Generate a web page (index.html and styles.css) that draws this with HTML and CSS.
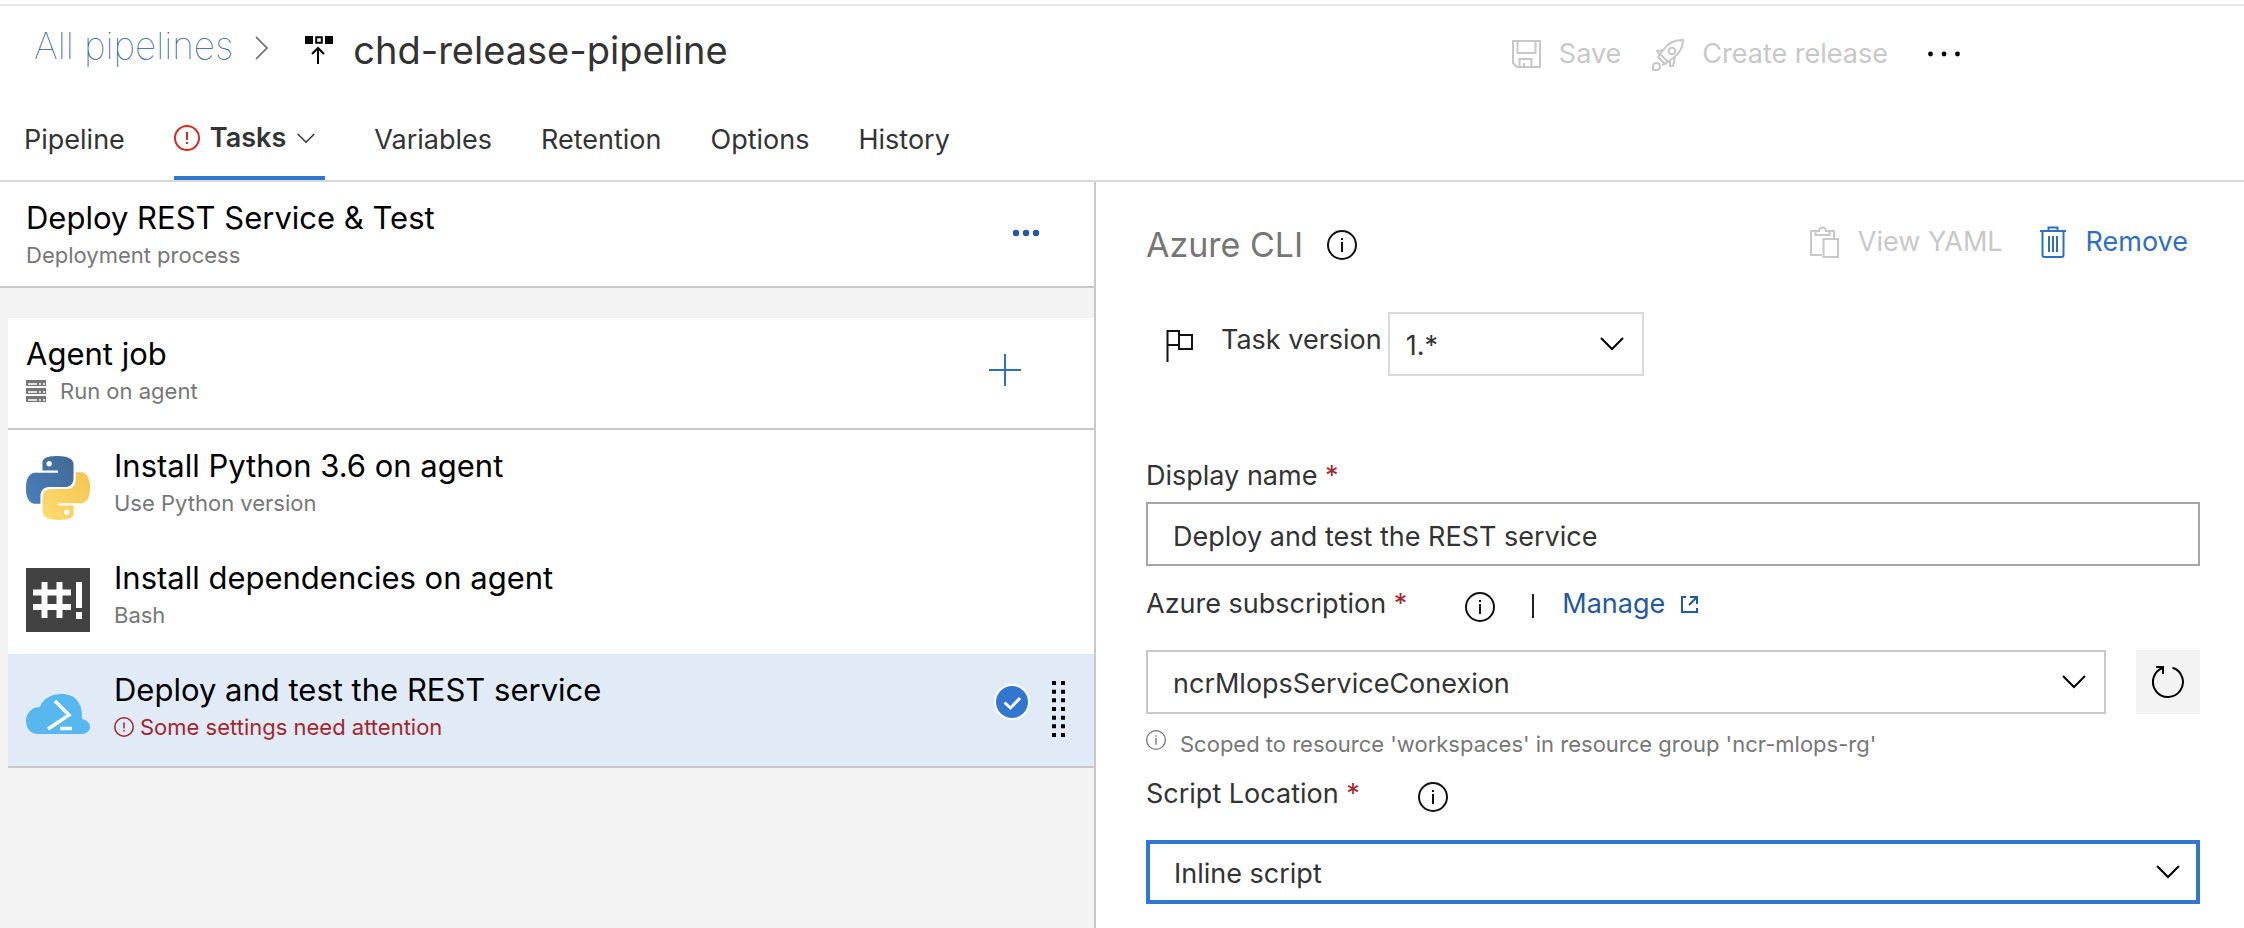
FILE: index.html
```html
<!DOCTYPE html>
<html lang="en">
<head>
<meta charset="utf-8">
<title>chd-release-pipeline</title>
<link rel="stylesheet" href="styles.css">
</head>
<body>
<svg class="defs" aria-hidden="true">
  <symbol id="info" viewBox="0 0 30 30"><g fill="none" stroke="currentColor"><circle cx="15" cy="15" r="14" stroke-width="2"/><path d="M15 12v10M15 8v2" stroke-width="2"/></g></symbol>
  <symbol id="alert" viewBox="0 0 26 26"><g fill="none" stroke="currentColor"><circle cx="13" cy="13" r="12" stroke-width="2"/><path d="M13 7v8M13 17v2" stroke-width="2"/></g></symbol>
  <symbol id="chevron" viewBox="0 0 24 14"><path d="M1 1l11 11L23 1" fill="none" stroke="currentColor" stroke-width="2"/></symbol>
</svg>

<header class="page-header">
  <div class="title-row">
    <nav class="breadcrumb" aria-label="Breadcrumb">
      <a class="crumb-link" href="#">All pipelines</a>
      <svg class="crumb-sep" viewBox="0 0 14 24" aria-hidden="true"><path d="M1 1l11 11L1 23" fill="none" stroke="#666" stroke-width="1.6"/></svg>
      <svg class="pipeline-icon" viewBox="0 0 28 28" aria-hidden="true"><path d="M0 0h8v8H0zM20 0h8v8h-8z"/><path d="M11.2 1.2h5.6v5.6h-5.6zM13 28V12.500M7 18l6-6 6 6" fill="none" stroke="#000" stroke-width="2"/></svg>
      <h1 class="pipeline-name">chd-release-pipeline</h1>
    </nav>
    <div class="header-actions">
      <button class="action save" disabled>
        <svg width="29" height="28" viewBox="0 0 29 28" fill="none" stroke="currentColor" stroke-width="2" aria-hidden="true"><path d="M1 1h27v26H5l-4-4zM5.500 1v12h18V1M7.500 27v-8h12v8M12 27v-4"/></svg>
        Save
      </button>
      <button class="action" disabled>
        <svg width="33" height="33" viewBox="0 0 33 33" fill="none" stroke="currentColor" stroke-width="2" stroke-linejoin="round" aria-hidden="true"><path d="M32 2C24 2 17 5 13 11l-6 8 7 7 8-6C29 15 32 9 32 2zM13 12l-7 1 3 4M19 22v6h3l2-9M9 16l8 8M13 26l-2 1"/><circle cx="21" cy="13" r="3.300"/><path d="M2 32v-4a3.500 3.500 0 1 1 3.500 4z"/></svg>
        Create release
      </button>
      <button class="icon-button more" aria-label="More actions"><svg width="32" height="6" viewBox="0 0 32 6" aria-hidden="true"><circle cx="2.500" cy="3" r="2.400"/><circle cx="16" cy="3" r="2.400"/><circle cx="29.500" cy="3" r="2.400"/></svg></button>
    </div>
  </div>
  <nav class="tabs" aria-label="Pipeline sections">
    <a class="tab" href="#">Pipeline</a>
    <a class="tab tab-active" href="#" aria-current="page">
      <svg class="tab-alert" aria-hidden="true"><use href="#alert"/></svg>
      Tasks
      <svg class="tab-chevron" aria-hidden="true"><use href="#chevron"/></svg>
    </a>
    <a class="tab" href="#">Variables</a>
    <a class="tab" href="#">Retention</a>
    <a class="tab" href="#">Options</a>
    <a class="tab" href="#">History</a>
  </nav>
</header>

<main class="workspace">
  <section class="process" aria-label="Tasks">
    <div class="stage">
      <div class="row-text">
        <h2 class="row-title">Deploy REST Service &amp; Test</h2>
        <p class="row-sub">Deployment process</p>
      </div>
      <button class="icon-button stage-more" aria-label="Stage actions"><svg width="28" height="8" viewBox="0 0 28 8" fill="currentColor" aria-hidden="true"><circle cx="4" cy="4" r="3.200"/><circle cx="14" cy="4" r="3.200"/><circle cx="24" cy="4" r="3.200"/></svg></button>
    </div>
    <div class="job">
      <div class="job-head">
        <div class="row-text">
          <h3 class="row-title">Agent job</h3>
          <p class="row-sub"><svg class="server" viewBox="0 0 20 22" aria-hidden="true"><path d="M0 0h20v6H0zM0 8h20v6H0zM0 16h20v6H0z" fill="#777"/><path d="M2 4h9M2 12h9M2 20h9M13 4h2M17 4h2M13 12h2M17 12h2M13 20h2M17 20h2" stroke="#fff" stroke-width="1.500"/></svg>Run on agent</p>
        </div>
        <button class="icon-button add" aria-label="Add a task"><svg width="32" height="32" viewBox="0 0 32 32" aria-hidden="true"><path d="M0 16h32M16 0v32" stroke="currentColor" stroke-width="2"/></svg></button>
      </div>
      <ul class="tasks">
        <li class="task">
          <svg class="task-icon" viewBox="0 0 24 24" aria-hidden="true">
            <defs>
              <linearGradient id="blue" x1="0" y1="1" x2="1" y2="0"><stop offset="0" stop-color="#4a80bb"/><stop offset="1" stop-color="#416993"/></linearGradient>
              <linearGradient id="gold" x1="0" y1="1" x2="1" y2="0"><stop offset="0" stop-color="#f4c550"/><stop offset="1" stop-color="#fbdc74"/></linearGradient>
              <path id="snake" d="M14.250.18l.9.2.73.26.59.3.45.32.34.34.25.34.16.33.1.3.04.26.02.2-.01.13V8.500l-.05.63-.13.55-.21.46-.26.38-.3.31-.33.25-.35.19-.35.14-.33.1-.3.07-.26.04-.21.02H8.770l-.69.05-.59.14-.5.22-.41.27-.33.32-.27.35-.2.36-.15.37-.1.35-.07.32-.04.27-.02.21v3.060H3.170l-.21-.03-.28-.07-.32-.12-.35-.18-.36-.26-.36-.36-.35-.46-.32-.59-.28-.73-.21-.88-.14-1.050-.05-1.230.06-1.220.16-1.040.24-.87.32-.71.36-.57.4-.44.42-.33.42-.24.4-.16.36-.1.32-.05.24-.01h.16l.06.01h8.160v-.83H6.180l-.01-2.750-.02-.37.05-.34.11-.31.17-.28.25-.26.31-.23.38-.2.44-.18.51-.15.58-.12.64-.1.71-.06.77-.04.84-.02 1.270.05zm-6.300 1.980l-.23.33-.08.41.08.41.23.34.33.22.41.09.41-.09.33-.22.23-.34.08-.41-.08-.41-.23-.33-.33-.22-.41-.09-.41.09z"/>
            </defs>
            <use href="#snake" fill="url(#blue)"/><use href="#snake" fill="url(#gold)" transform="rotate(180 12 12)"/>
          </svg>
          <div class="row-text">
            <h4 class="row-title">Install Python 3.6 on agent</h4>
            <p class="row-sub">Use Python version</p>
          </div>
        </li>
        <li class="task">
          <svg class="task-icon" viewBox="0 0 64 64" aria-hidden="true"><path d="M0 0h64v64H0z" fill="#424242"/><path d="M7 24.500h38M7 39h38M18.500 14v36M33.500 14v36M53 14v26M53 44v7" stroke="#fff" stroke-width="6"/></svg>
          <div class="row-text">
            <h4 class="row-title">Install dependencies on agent</h4>
            <p class="row-sub">Bash</p>
          </div>
        </li>
        <li class="task task-selected">
          <svg class="task-icon" viewBox="0 0 64 64" aria-hidden="true"><path d="M12 54C5 54 0 49 0 41S6 27 14 27C17 18 26 14 36 14c13 0 21 9 20 25 5 1 8 4 8 8 0 4-4 7-8 7z" fill="#56b8ee"/><path d="M29 21l14 14-21 14" fill="none" stroke="#fff" stroke-width="3.500"/><path d="M34 48.500h12" stroke="#fff" stroke-width="3.500"/></svg>
          <div class="row-text">
            <h4 class="row-title">Deploy and test the REST service</h4>
            <p class="row-sub row-error"><svg class="small-alert" aria-hidden="true"><use href="#alert"/></svg>Some settings need attention</p>
          </div>
          <svg class="check" viewBox="0 0 36 36" aria-hidden="true"><circle cx="18" cy="18" r="18" fill="#fff"/><circle cx="18" cy="18" r="16" fill="#3277cf"/><path d="M10.500 18.500l6 5.500 9.500-10" fill="none" stroke="#fff" stroke-width="3"/></svg>
          <svg class="grip" viewBox="0 0 13 56" aria-hidden="true"><path d="M2 0v56M11 0v56" stroke="#000" stroke-width="4" stroke-dasharray="4 4.660"/></svg>
        </li>
      </ul>
    </div>
  </section>

  <form class="details">
    <div class="details-head">
      <h2 class="details-title">Azure CLI <svg class="info" aria-hidden="true"><use href="#info"/></svg></h2>
      <div class="details-actions">
        <button class="action" type="button" disabled>
          <svg width="30" height="32" viewBox="0 0 30 32" fill="none" stroke="currentColor" stroke-width="2" aria-hidden="true"><path d="M12 29H1V5h8a3.500 3.500 0 0 1 7 0h8v7M5.500 5v4h14V5M13.500 13H28v18H13.500z"/></svg>
          View YAML
        </button>
        <button class="action action-link" type="button">
          <svg width="26" height="32" viewBox="0 0 26 32" fill="none" stroke="currentColor" stroke-width="2" aria-hidden="true"><path d="M0 5h26M8.500 5V1.500h9V5M2.500 5v24q0 2 2 2h17q2 0 2-2V5M9 10v16M13 10v16M17 10v16"/></svg>
          Remove
        </button>
      </div>
    </div>

    <div class="version">
      <svg class="flag" viewBox="0 0 28 32" fill="none" stroke="#111" stroke-width="2" aria-hidden="true"><path d="M1.500 32V1H13v14H1.500M13 5h13v14H13v-4"/></svg>
      <label class="version-label" for="version">Task version</label>
      <div class="select-wrap version-select">
        <select class="control control-light" id="version"><option>1.*</option></select>
        <svg class="chevron" aria-hidden="true"><use href="#chevron"/></svg>
      </div>
    </div>

    <div class="field field-name">
      <div class="label-row"><label for="name">Display name <span class="req">*</span></label></div>
      <input class="control control-dark" id="name" type="text" value="Deploy and test the REST service">
    </div>

    <div class="field field-wide">
      <div class="label-row">
        <label for="subscription">Azure subscription <span class="req">*</span></label>
        <svg class="info" aria-hidden="true"><use href="#info"/></svg>
        <span class="divider"></span>
        <a class="manage" href="#">Manage <svg width="18" height="18" viewBox="0 0 18 18" fill="none" stroke="currentColor" stroke-width="2" aria-hidden="true"><path d="M5 2H1v15h15v-4M9 2h7v7M16 2l-8 8"/></svg></a>
      </div>
      <div class="control-row">
        <div class="select-wrap">
          <select class="control" id="subscription"><option>ncrMlopsServiceConexion</option></select>
          <svg class="chevron" aria-hidden="true"><use href="#chevron"/></svg>
        </div>
        <button class="refresh" type="button" aria-label="Refresh"><svg width="32" height="32" viewBox="0 0 32 32" fill="none" stroke="#000" stroke-width="2" aria-hidden="true"><path d="M20.500 1.700A15 15 0 1 1 10.500 2M4 1h7v7"/></svg></button>
      </div>
      <p class="hint"><svg class="hint-icon" aria-hidden="true"><use href="#info"/></svg>Scoped to resource 'workspaces' in resource group 'ncr-mlops-rg'</p>
    </div>

    <div class="field field-wide field-script">
      <div class="label-row">
        <label for="location">Script Location <span class="req">*</span></label>
        <svg class="info" aria-hidden="true"><use href="#info"/></svg>
      </div>
      <div class="select-wrap">
        <select class="control control-focus" id="location"><option>Inline script</option></select>
        <svg class="chevron" aria-hidden="true"><use href="#chevron"/></svg>
      </div>
    </div>
  </form>
</main>
</body>
</html>
```
FILE: styles.css
```css
* { box-sizing: border-box; }

body {
  margin: 0;
  padding-top: 4px;
  min-height: 100vh;
  display: flex;
  flex-direction: column;
  font: 27px/40px Inter, "Liberation Sans", sans-serif;
  color: #333;
  background: #fff;
}

h1, h2, h3, h4, p, ul { margin: 0; padding: 0; font-weight: 400; }
ul { list-style: none; }
a { text-decoration: none; color: inherit; }
svg { flex: none; display: block; }
button, input, select { font: inherit; color: inherit; margin: 0; }
button { border: 0; padding: 0; background: none; }
.defs { position: absolute; width: 0; height: 0; }

/* Header */
.page-header { border-top: 2px solid #eaeaea; border-bottom: 2px solid #d9d9d9; }
.title-row { display: flex; justify-content: space-between; height: 84px; padding: 0 284px 0 34px; }
.breadcrumb { display: flex; align-items: center; }
.crumb-link { font-size: 37px; line-height: 48px; font-weight: 100; color: #1f5a9e; margin-bottom: 4px; }
.crumb-sep { width: 14px; height: 24px; margin-left: 22px; }
.pipeline-icon { width: 28px; height: 28px; margin: 4px 20px 0 36px; }
.pipeline-name { font-size: 38px; line-height: 48px; margin-top: 4px; }
.header-actions { display: flex; align-items: center; padding-top: 12px; gap: 30px; }
.action { display: flex; align-items: center; gap: 18px; white-space: nowrap; }
.action:disabled { color: #c8c8c8; }
.icon-button { display: flex; }
.more { margin-left: 10px; }

.tabs { display: flex; align-items: flex-end; height: 90px; padding-left: 24px; gap: 49px; }
.tab { padding-bottom: 20px; }
.tab-active { display: flex; align-items: center; font-weight: 600; padding: 0 10px 18px 0; border-bottom: 4px solid #3277cf; }
.tab-alert { width: 26px; height: 26px; margin-right: 10px; color: #d62d20; }
.tab-chevron { width: 18px; height: 11px; margin-left: 11px; }

/* Task list */
.workspace { flex: 1; display: grid; grid-template-columns: 1096fr 1148fr; }
.process { background: #f3f3f3; border-right: 2px solid #c8c8c8; }
.stage, .job-head, .task { display: flex; background: #fff; padding-top: 16px; }
.stage { height: 106px; padding-left: 26px; border-bottom: 2px solid #c8c8c8; }
.row-text { flex: 1; min-width: 0; }
.row-title { font-size: 31px; line-height: 40px; color: #000; }
.row-sub { display: flex; align-items: center; font-size: 22px; line-height: 34px; color: #777; }
.row-error { color: #a4262c; }
.stage-more { align-self: flex-start; color: #2259a0; margin: 31px 54px 0 0; }
.job { margin: 30px 0 0 8px; border-bottom: 2px solid #c8c8c8; }
.job-head { height: 112px; padding-left: 18px; border-bottom: 2px solid #c8c8c8; }
.server { width: 20px; height: 22px; margin-right: 14px; }
.add { color: #2f6fbf; margin: 20px 73px 0 0; align-self: flex-start; }
.task { height: 112px; padding-left: 18px; }
.task-icon { width: 64px; height: 64px; margin: 10px 24px 0 0; }
.task-selected { background: #e1ebf7; }
.small-alert { width: 20px; height: 20px; margin-right: 6px; }
.check { width: 36px; height: 36px; margin: 14px 22px 0 0; }
.grip { width: 13px; height: 56px; margin: 11px 29px 0 0; }

/* Task details */
.details { padding: 40px 44px 16px 50px; }
.details-head { display: flex; justify-content: space-between; height: 44px; }
.details-title { display: flex; align-items: center; font-size: 34px; line-height: 40px; padding-top: 2px; color: #767676; gap: 24px; }
.info { width: 30px; height: 30px; color: #111; }
.details-actions { display: flex; align-items: center; gap: 37px; padding: 0 12px 4px 0; }
.action-link { color: #2f6fbf; gap: 20px; }

.version { display: flex; align-items: center; margin-top: 46px; padding-left: 20px; }
.flag { width: 28px; height: 32px; margin: 4px 27px 0 0; }
.version-label { margin: 0 6px 8px 0; }
.version-select { width: 256px; }

.field-name { margin: 80px 0 18px; }
.field-name .control { margin-top: 6px; }
.field-wide .label-row { margin-bottom: 26px; }
.field-script { margin-top: 14px; }
.label-row { display: flex; align-items: center; height: 40px; }
.label-row .info { margin: 6px 0 0 58px; }
.req { color: #a4262c; }
.divider { width: 2px; height: 24px; margin: 4px 28px 0 37px; background: #222; }
.manage { display: flex; align-items: center; gap: 16px; color: #2259a0; }
.control-row { display: flex; gap: 30px; }
.select-wrap { flex: 1; display: grid; align-items: center; }
.version-select { flex: none; }
.select-wrap > * { grid-area: 1 / 1; }
.control {
  display: block;
  width: 100%;
  height: 64px;
  padding: 4px 25px 0;
  border: 2px solid #c8c8c8;
  border-radius: 0;
  background: #fff;
  appearance: none;
  outline: none;
}
.control-light { border-color: #d9d9d9; padding-left: 16px; }
.control-dark { border-color: #a6a6a6; }
.control-focus { border: 4px solid #3277cf; padding-left: 24px; }
.chevron { width: 24px; height: 14px; margin-right: 20px; justify-self: end; color: #000; pointer-events: none; }
.refresh { display: flex; align-items: center; justify-content: center; width: 64px; height: 64px; background: #f3f3f3; }
.hint { display: flex; align-items: center; gap: 14px; margin-top: 14px; font-size: 22px; line-height: 32px; color: #777; }
.hint-icon { width: 20px; height: 20px; margin-bottom: 8px; }
```
